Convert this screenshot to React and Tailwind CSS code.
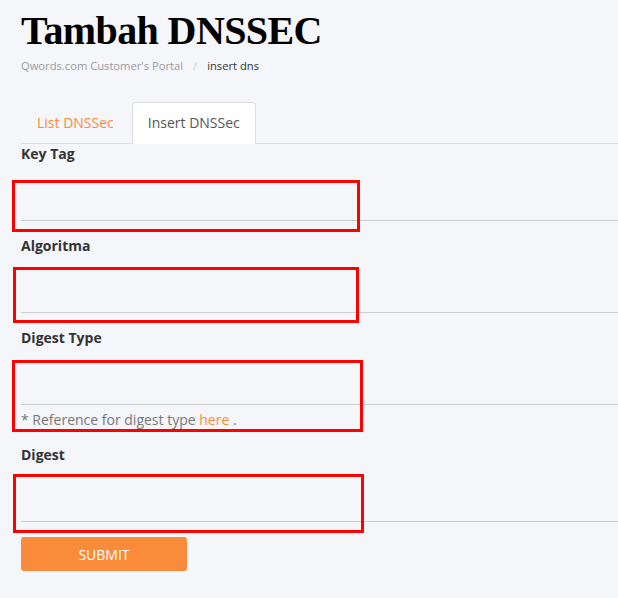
import { useState } from 'react';

const fields = [
  { id: 'keytag', label: 'Key Tag' },
  { id: 'algoritma', label: 'Algoritma' },
  { id: 'digesttype', label: 'Digest Type', help: true },
  { id: 'digest', label: 'Digest' },
];

// red annotation boxes drawn over the form in the screenshot
const marks = [
  { left: 12, top: 180, width: 348, height: 52 },
  { left: 13, top: 267, width: 346, height: 56 },
  { left: 12, top: 360, width: 351, height: 72 },
  { left: 13, top: 474, width: 351, height: 59 },
];

const App = () => {
  const [values, setValues] = useState({});

  return (
    <div className="relative min-h-[598px] bg-[#f5f6fa] pl-[21px] font-['Open_Sans',sans-serif] text-[14px] text-[#333]">
      <h1 className="pt-[9px] font-['Liberation_Serif',serif] text-[40px] font-bold leading-[44px] tracking-[-0.6px] text-black">
        Tambah DNSSEC
      </h1>

      <div className="mt-[3px] flex items-center text-[11.2px] leading-[20px]">
        <span className="text-[#9a9a9a]">Qwords.com Customer's Portal</span>
        <span className="px-[10px] text-[#ccc]">/</span>
        <span className="text-[#333]">insert dns</span>
      </div>

      <ul className="mt-[26px] flex border-b border-[#ddd]">
        <li className="-mb-px mr-[2px]">
          <a className="block rounded-t-[4px] border border-transparent px-[15px] py-[10px] leading-[20px] text-[#f98b3b]">
            List DNSSec
          </a>
        </li>
        <li className="-mb-px">
          <a className="block rounded-t-[4px] border border-[#ddd] border-b-white bg-white px-[15px] py-[10px] leading-[20px] text-[#555]">
            Insert DNSSec
          </a>
        </li>
      </ul>

      <form className="mt-0 flex flex-col gap-[15px]" onSubmit={(e) => e.preventDefault()}>
        {fields.map((f) => (
          <div key={f.id}>
            <label htmlFor={f.id} className="block font-bold leading-[20px] text-[#333]">
              {f.label}
            </label>
            <input
              id={f.id}
              type="text"
              value={values[f.id] || ''}
              onChange={(e) => setValues({ ...values, [f.id]: e.target.value })}
              className="mt-[21px] block h-[36px] w-full border-b border-[#ccc] bg-transparent outline-none"
            />
            {f.help && (
              <p className="mt-[5px] leading-[20px] text-[#777]">
                * Reference for digest type <a className="text-[#f98b3b]">here</a> .
              </p>
            )}
          </div>
        ))}
        <button
          type="submit"
          className="h-[34px] w-[166px] rounded-[3px] bg-[#f98b3b] text-[14px] text-white"
        >
          SUBMIT
        </button>
      </form>

      {marks.map((m, i) => (
        <div
          key={i}
          className="pointer-events-none absolute border-[3px] border-[#ff0000]"
          style={{ left: m.left, top: m.top, width: m.width, height: m.height }}
        />
      ))}
    </div>
  );
};

export default App;
